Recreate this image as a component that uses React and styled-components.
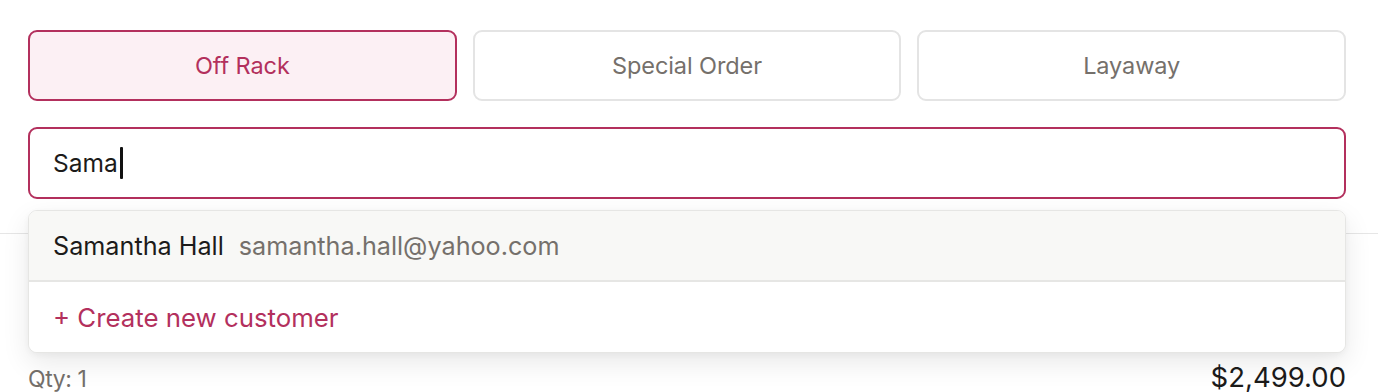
import React from "react";
import styled, { createGlobalStyle } from "styled-components";

const GlobalStyle = createGlobalStyle`
  * { box-sizing: border-box; }
  html, body { margin: 0; padding: 0; background: #ffffff; }
  body {
    font-family: Inter, "Noto Sans", Roboto, sans-serif;
    color: #1c1b1a;
    -webkit-font-smoothing: antialiased;
  }
`;

const ACCENT = "#b3305d";
const MUTED = "#75706b";

const Page = styled.div`
  width: 1378px;
  height: 392px;
  overflow: hidden;
  background: #fff;
`;

const TopSection = styled.section`
  padding: 30px 32px 34px 28px;
  border-bottom: 1.5px solid #e6e6e6;
  display: flex;
  flex-direction: column;
  gap: 26px;
`;

const Tabs = styled.div`
  display: grid;
  grid-template-columns: repeat(3, 1fr);
  gap: 16px;
`;

const Tab = styled.button`
  height: 71px;
  border-radius: 9px;
  border: 2px solid ${(p) => (p.$active ? ACCENT : "#e4e4e4")};
  background: ${(p) => (p.$active ? "#fcf0f4" : "#ffffff")};
  color: ${(p) => (p.$active ? ACCENT : MUTED)};
  font-family: inherit;
  font-size: 23.5px;
  font-weight: 400;
  letter-spacing: -0.1px;
  cursor: pointer;
`;

const SearchWrap = styled.div`
  position: relative;
`;

const SearchField = styled.div`
  height: 72px;
  border: 2px solid ${ACCENT};
  border-radius: 9px;
  padding: 0 23px;
  display: flex;
  align-items: center;
  font-size: 24.5px;
  color: #1c1b1a;
`;

const Caret = styled.span`
  display: inline-block;
  width: 3px;
  height: 32px;
  background: #111;
  margin-left: 2px;
  border-radius: 1px;
`;

const Dropdown = styled.div`
  position: absolute;
  top: 83px;
  left: 0;
  right: 0;
  background: #fff;
  border: 1.5px solid #e6e6e4;
  border-radius: 9px;
  box-shadow: 0 10px 28px rgba(0, 0, 0, 0.09), 0 2px 6px rgba(0, 0, 0, 0.04);
  overflow: hidden;
  z-index: 10;
`;

const Option = styled.div`
  height: ${(p) => p.$h}px;
  display: flex;
  align-items: center;
  gap: 15px;
  padding: 0 24px;
  background: ${(p) => (p.$highlight ? "#f8f8f6" : "#ffffff")};
  border-bottom: ${(p) => (p.$divider ? "2px solid #e6e6e4" : "none")};
  font-size: ${(p) => p.$size}px;
`;

const Name = styled.span`
  color: #1c1b1a;
`;

const Email = styled.span`
  color: ${MUTED};
`;

const CreateLink = styled.span`
  color: ${ACCENT};
`;

const ItemSection = styled.section`
  padding: 126px 32px 0 28px;
`;

const ItemRow = styled.div`
  display: flex;
  justify-content: space-between;
  align-items: baseline;
`;

const Qty = styled.span`
  font-size: 23px;
  color: ${MUTED};
  letter-spacing: -0.4px;
`;

const Price = styled.span`
  font-size: 27.5px;
  color: #1c1b1a;
`;

export default function App() {
  return (
    <>
      <GlobalStyle />
      <Page>
        <TopSection>
          <Tabs>
            <Tab $active>Off Rack</Tab>
            <Tab>Special Order</Tab>
            <Tab>Layaway</Tab>
          </Tabs>
          <SearchWrap>
            <SearchField>
              Sama
              <Caret />
            </SearchField>
            <Dropdown>
              <Option $h={71} $size={25.2} $highlight $divider>
                <Name>Samantha Hall</Name>
                <Email>samantha.hall@yahoo.com</Email>
              </Option>
              <Option $h={70} $size={25.8}>
                <CreateLink>+ Create new customer</CreateLink>
              </Option>
            </Dropdown>
          </SearchWrap>
        </TopSection>
        <ItemSection>
          <ItemRow>
            <Qty>Qty: 1</Qty>
            <Price>$2,499.00</Price>
          </ItemRow>
        </ItemSection>
      </Page>
    </>
  );
}
